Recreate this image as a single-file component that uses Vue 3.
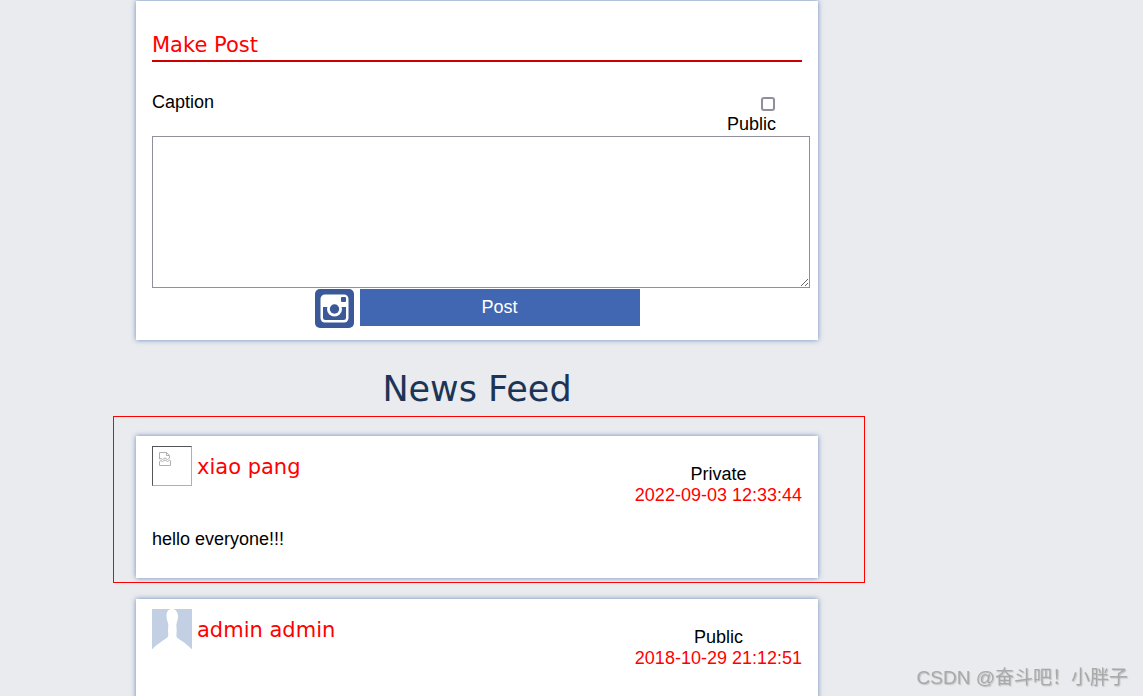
<script setup>
import { ref } from 'vue';

const caption = ref('');
const isPublic = ref(false);

const posts = [
  { id: 1, name: 'xiao pang', visibility: 'Private', date: '2022-09-03 12:33:44', text: 'hello everyone!!!', broken: true },
  { id: 2, name: 'admin admin', visibility: 'Public', date: '2018-10-29 21:12:51', text: '', broken: false },
];
</script>

<template>
  <div class="page">
    <section class="card make-post">
      <h2 class="make-post__title">Make Post</h2>
      <div class="make-post__head">
        <label class="caption-label" for="caption">Caption</label>
        <label class="public-check">
          <input v-model="isPublic" class="public-check__box" type="checkbox">
          <span>Public</span>
        </label>
      </div>
      <textarea id="caption" v-model="caption" class="make-post__input"></textarea>
      <div class="make-post__actions">
        <svg class="insta" viewBox="0 0 39 39" width="39" height="39">
          <rect width="39" height="39" rx="5" fill="#3b5998" />
          <rect x="5.5" y="5.5" width="28" height="28" rx="4.5" fill="#fff" />
          <path d="M8 18h5.6a7 7 0 0 0 11.8 0H31v10.500a2.500 2.500 0 0 1-2.500 2.500h-18A2.500 2.500 0 0 1 8 28.500z" fill="#3b5998" />
          <circle cx="19.500" cy="20" r="7.500" fill="#fff" />
          <circle cx="19.500" cy="20" r="4.700" fill="#3b5998" />
          <rect x="26" y="8" width="5" height="5" rx="1" fill="#3b5998" />
        </svg>
        <button class="post-btn" type="button">Post</button>
      </div>
    </section>

    <h1 class="feed-title">News Feed</h1>

    <div class="feed">
      <div v-for="post in posts" :key="post.id" :class="['feed__item', { 'feed__item--active': post.broken }]">
        <article class="card post">
          <div class="post__head">
            <div class="post__author">
              <div v-if="post.broken" class="avatar avatar--broken">
                <svg viewBox="0 0 14 14" width="14" height="14" fill="none" stroke="#b0b0b0" stroke-width="1">
                  <path d="M1.500 7V.5h7l3 3V6l-2 1.500L7 6 4.500 7.500 3 6.500z" />
                  <path d="M8.500.5v3h3" />
                  <path d="M1.500 9.500 3 8.500l1.500 1L7 8l2.500 1.500 2-1.300 1 .6v4.700h-11z" />
                </svg>
              </div>
              <svg v-else class="avatar" viewBox="0 0 40 40" width="40" height="40">
                <rect width="40" height="40" fill="#c3cfe2" />
                <path d="M20 0c-3.500 0-5.500 2.500-5.500 6.500 0 3 .8 5.500 1.600 8 .6 2-.1 4-.1 6.500 0 3.500 1 6-.8 7.500-2.200 2-9 5.500-15.200 12h40c-5.500-6-12-9.500-14.500-11.500-1.800-1.500-.8-4.500-.8-8 0-2.500-.7-4.500-.1-6.500.8-2.500 1.400-5 1.400-8C25.500 2.500 23.500 0 20 0z" fill="#fff" />
              </svg>
              <span class="post__name">{{ post.name }}</span>
            </div>
            <div class="post__meta">
              <div>{{ post.visibility }}</div>
              <div class="post__date">{{ post.date }}</div>
            </div>
          </div>
          <p class="post__text">{{ post.text }}</p>
        </article>
      </div>
    </div>

    <div class="watermark">CSDN @奋斗吧！小胖子</div>
  </div>
</template>

<style scoped>
.page {
  width: 682px;
  margin-left: 136px;
  padding-top: 1px;
  font-family: "Liberation Sans", Arial, sans-serif;
  font-size: 18px;
  color: #000;
}

.card {
  background: #fff;
  box-shadow: 0 0 5px rgba(66, 103, 178, 0.75);
  box-sizing: border-box;
}

.make-post {
  height: 339px;
  padding: 30px 16px 0;
}

.make-post__title {
  margin: 0;
  height: 29px;
  border-bottom: 2px solid #c00;
  font-family: "DejaVu Sans", sans-serif;
  font-size: 21px;
  font-weight: 400;
  line-height: 28px;
  color: #f00;
}

.make-post__head {
  display: flex;
  justify-content: space-between;
  padding-top: 30px;
  height: 44px;
}

.caption-label {
  line-height: 21px;
}

.public-check {
  display: flex;
  flex-direction: column;
  align-items: flex-end;
  padding-right: 26px;
  line-height: 21px;
}

.public-check__box {
  appearance: none;
  width: 14px;
  height: 14px;
  margin: 5px 1px 3px 0;
  border: 2px solid #8f8f9d;
  border-radius: 3px;
  background: #fff;
  box-sizing: border-box;
}

.make-post__input {
  display: block;
  width: 658px;
  height: 152px;
  margin: 0;
  padding: 2px;
  border: 1px solid #8f8f9d;
  box-sizing: border-box;
  background: #fff;
  outline: none;
}

.make-post__actions {
  display: flex;
  justify-content: center;
  align-items: flex-start;
  gap: 6px;
  margin-top: 1px;
}

.insta {
  display: block;
}

.post-btn {
  width: 280px;
  height: 37px;
  padding: 0;
  border: none;
  background: #4267b2;
  color: #fff;
  font-family: "Liberation Sans", Arial, sans-serif;
  font-size: 18px;
}

.feed-title {
  margin: 28px 0 0;
  height: 48px;
  font-family: "DejaVu Sans", sans-serif;
  font-size: 35px;
  font-weight: 400;
  line-height: 42px;
  text-align: center;
  color: #1c3557;
}

.feed__item {
  margin: 0 -47px 0 -23px;
  padding: 20px 47px 20px 23px;
  box-sizing: border-box;
}

.feed__item--active {
  height: 167px;
  padding-top: 19px;
  padding-bottom: 4px;
  border: 1px solid #f00;
  padding-left: 22px;
  padding-right: 46px;
}

.feed__item:not(.feed__item--active) {
  padding-top: 16px;
}

.post {
  height: 142px;
  padding: 10px 16px 0;
}

.post__head {
  display: flex;
  justify-content: space-between;
  align-items: flex-start;
}

.post__author {
  display: flex;
  align-items: flex-start;
  gap: 5px;
}

.avatar {
  display: block;
  flex: none;
}

.avatar--broken {
  width: 40px;
  height: 40px;
  padding: 5px 5px;
  border: 1px solid;
  border-color: #555 #b0b0b0 #b0b0b0 #555;
  box-sizing: border-box;
}

.avatar--broken svg {
  display: block;
}

.post__name {
  margin-top: 7px;
  font-family: "DejaVu Sans", sans-serif;
  font-size: 21px;
  line-height: 28px;
  color: #f00;
}

.post__meta {
  margin-top: 18px;
  line-height: 21px;
  text-align: center;
}

.post__date {
  color: #f00;
}

.post__text {
  margin: 23px 0 0;
  line-height: 21px;
}

.watermark {
  position: fixed;
  right: 15px;
  bottom: 7px;
  font-family: "Liberation Sans", "Noto Sans CJK SC", sans-serif;
  font-size: 19px;
  color: #a9a9a9;
  text-shadow: 1px 1px 1px rgba(120, 120, 120, 0.35);
}
</style>

<style>
html,
body {
  height: 100%;
  overflow: hidden;
  background: #e9ebee;
}
</style>
